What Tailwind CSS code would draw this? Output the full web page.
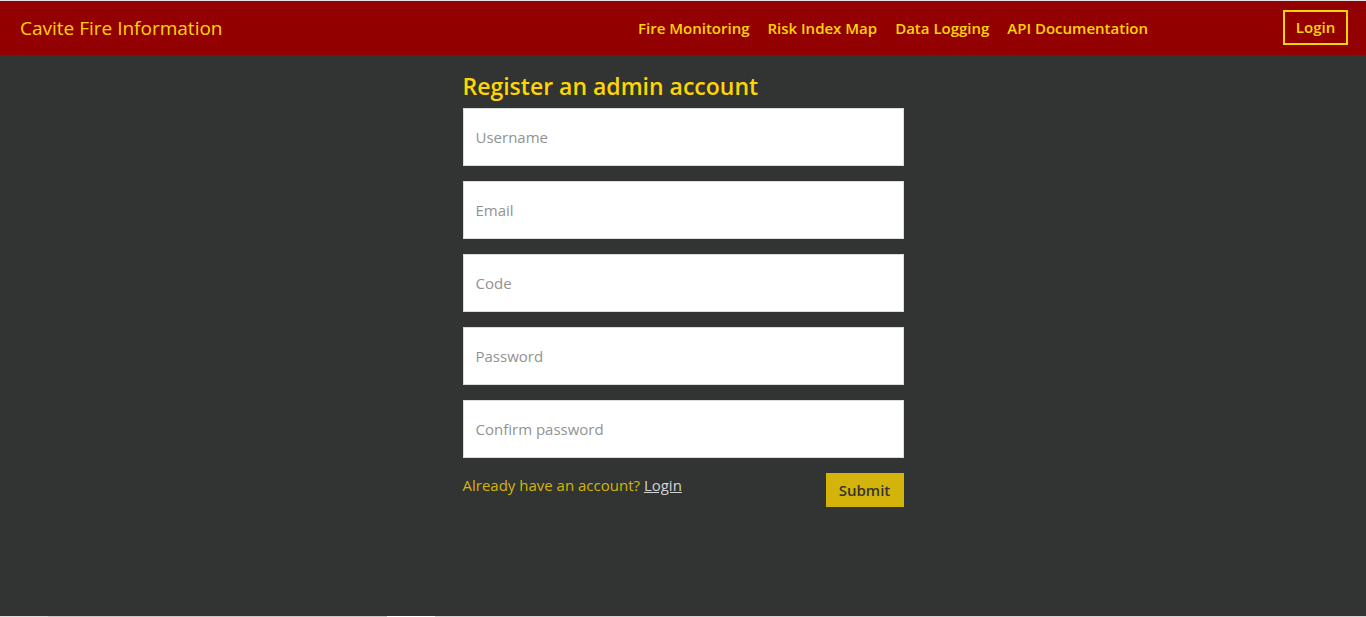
<!DOCTYPE html>
<html lang="en">
<head>
<meta charset="utf-8">
<meta name="viewport" content="width=device-width, initial-scale=1">
<title>Cavite Fire Information</title>
<script src="https://cdn.jsdelivr.net/npm/@tailwindcss/browser@4"></script>
</head>
<body class="flex min-h-screen flex-col border-t border-[#e4e4e4] bg-[#323433] font-['Open_Sans','Noto_Sans',sans-serif]">
<header class="flex min-h-[54px] items-start bg-[#930000] pt-[9px] pr-[18px] pl-5 leading-[37px] text-[#ffd504]">
  <a href="#" class="text-[19px]">Cavite Fire Information</a>
  <nav class="ml-auto flex gap-[18px] text-[15px] font-semibold">
    <a href="#">Fire Monitoring</a>
    <a href="#">Risk Index Map</a>
    <a href="#">Data Logging</a>
    <a href="#">API Documentation</a>
  </nav>
  <a href="#" class="ml-[135px] flex h-[35px] w-[65px] items-center justify-center border-2 border-[#ffd504] text-[15px] font-semibold">Login</a>
</header>
<main class="flex-1 px-4 pt-4">
  <form class="mx-auto flex max-w-[441px] flex-col">
    <h1 class="mb-[7px] text-[23px] leading-[30px] font-semibold text-[#ffd504]">Register an admin account</h1>
    <div class="flex flex-col gap-[15px] text-[15px]">
      <input type="text" aria-label="Username" placeholder="Username" class="h-[58px] w-full border border-[#d8dde2] bg-white px-3 placeholder:text-[#929292]">
      <input type="email" aria-label="Email" placeholder="Email" class="h-[58px] w-full border border-[#d8dde2] bg-white px-3 placeholder:text-[#929292]">
      <input type="text" aria-label="Code" placeholder="Code" class="h-[58px] w-full border border-[#d8dde2] bg-white px-3 placeholder:text-[#929292]">
      <input type="password" aria-label="Password" placeholder="Password" class="h-[58px] w-full border border-[#d8dde2] bg-white px-3 placeholder:text-[#929292]">
      <input type="password" aria-label="Confirm password" placeholder="Confirm password" class="h-[58px] w-full border border-[#d8dde2] bg-white px-3 placeholder:text-[#929292]">
      <div class="flex items-start justify-between">
        <p class="leading-6 text-[#d4b40a]">Already have an account? <a href="#" class="text-[#d3d3d3] underline">Login</a></p>
        <button type="submit" class="h-[34px] w-[78px] bg-[#d4b40a] font-semibold text-[#323433]">Submit</button>
      </div>
    </div>
  </form>
</main>
<footer class="flex h-px bg-[#c8c8c8]">
  <div class="w-12 bg-[#dedede]"></div>
  <div class="ml-[339px] w-12 bg-white"></div>
  <div class="flex-1 bg-[#d4d4d4]"></div>
</footer>
</body>
</html>
